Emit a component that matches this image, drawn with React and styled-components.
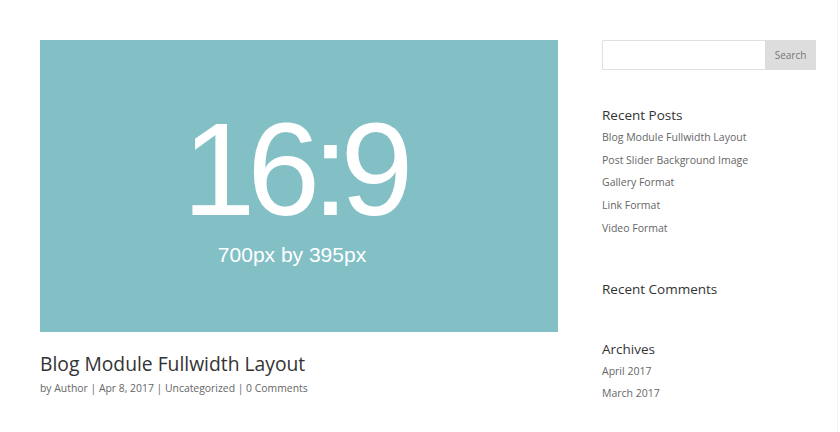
import React from "react";
import styled, { createGlobalStyle } from "styled-components";

const Global = createGlobalStyle`
  html, body { margin: 0; padding: 0; background: #fff; }
  body { font-family: "Open Sans", "Liberation Sans", sans-serif; }
  * { box-sizing: border-box; }
`;

const Page = styled.div`
  width: 840px;
  height: 432px;
  display: flex;
  gap: 44px;
  padding: 40px 0 0 40px;
  overflow: hidden;
  position: relative;
`;

const Main = styled.main`
  width: 518px;
  flex: none;
  display: flex;
  flex-direction: column;
`;

const Placeholder = styled.div`
  width: 518px;
  height: 292px;
  background: #82c0c6;
  color: #fff;
  display: flex;
  flex-direction: column;
  align-items: center;
  font-family: "Liberation Sans", Arial, sans-serif;
`;

const Ratio = styled.div`
  margin-top: 75px;
  margin-right: 10px;
  font-size: 131px;
  line-height: 110px;
  letter-spacing: -8px;
  height: 110px;
`;

const Dim = styled.div`
  margin-top: 18px;
  margin-right: 14px;
  font-size: 21px;
  line-height: 24px;
`;

const Title = styled.h2`
  margin: 19px 0 0;
  font-size: 19.3px;
  line-height: 26px;
  font-weight: 400;
  color: #333;
`;

const Meta = styled.div`
  margin-top: 3px;
  font-size: 10.4px;
  line-height: 16px;
  color: #666;
`;

const Sidebar = styled.aside`
  width: 214px;
  flex: none;
  display: flex;
  flex-direction: column;
`;

const SearchForm = styled.form`
  display: flex;
  height: 30px;
  margin: 0;
`;

const SearchInput = styled.input`
  flex: 1;
  min-width: 0;
  width: 0;
  border: 1px solid #e0e0e0;
  border-right: none;
  border-radius: 2px 0 0 2px;
  outline: none;
  padding: 0 8px;
  height: 30px;
`;

const SearchButton = styled.button`
  width: 51px;
  flex: none;
  height: 30px;
  border: none;
  background: #dddddd;
  color: #777;
  font-family: "Open Sans", sans-serif;
  font-size: 10px;
  padding: 0;
`;

const Widget = styled.section`
  margin-top: ${(p) => p.$top}px;
`;

const WidgetTitle = styled.h4`
  margin: 0;
  font-size: 13.5px;
  line-height: 20px;
  font-weight: 400;
  color: #333;
`;

const List = styled.ul`
  list-style: none;
  margin: ${(p) => p.$top || 0}px 0 0;
  padding: 0;
`;

const Item = styled.li`
  font-size: 10.5px;
  line-height: 22.7px;
  color: #666;
`;

const Divider = styled.div`
  position: absolute;
  right: 2px;
  top: 0;
  width: 1px;
  height: 432px;
  background: #f3f3f3;
`;

export default function App() {
  return (
    <>
      <Global />
      <Page>
        <Main>
          <Placeholder>
            <Ratio>16:9</Ratio>
            <Dim>700px by 395px</Dim>
          </Placeholder>
          <Title>Blog Module Fullwidth Layout</Title>
          <Meta>by Author | Apr 8, 2017 | Uncategorized | 0 Comments</Meta>
        </Main>
        <Sidebar>
          <SearchForm onSubmit={(e) => e.preventDefault()}>
            <SearchInput type="text" />
            <SearchButton type="submit">Search</SearchButton>
          </SearchForm>
          <Widget $top={35}>
            <WidgetTitle>Recent Posts</WidgetTitle>
            <List $top={1}>
              <Item>Blog Module Fullwidth Layout</Item>
              <Item>Post Slider Background Image</Item>
              <Item>Gallery Format</Item>
              <Item>Link Format</Item>
              <Item>Video Format</Item>
            </List>
          </Widget>
          <Widget $top={39}>
            <WidgetTitle>Recent Comments</WidgetTitle>
          </Widget>
          <Widget $top={40}>
            <WidgetTitle>Archives</WidgetTitle>
            <List $top={1}>
              <Item>April 2017</Item>
              <Item>March 2017</Item>
            </List>
          </Widget>
        </Sidebar>
        <Divider />
      </Page>
    </>
  );
}
